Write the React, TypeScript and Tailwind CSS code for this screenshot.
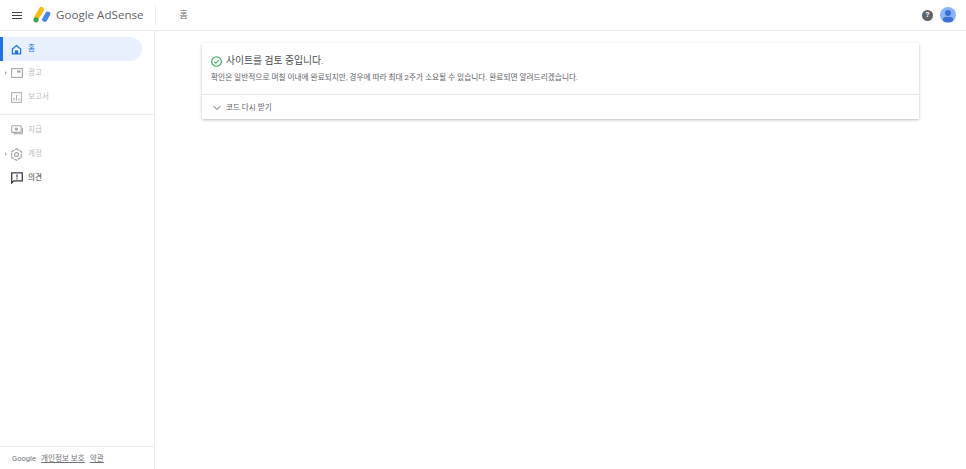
import { ChevronDown } from 'lucide-react';

const sans = "font-['Roboto','Noto_Sans_CJK_KR',sans-serif]";

function Logo() {
	return (
		<svg width="18" height="16" viewBox="0 0 18 16">
			<path d="M8.4 2.4 L4 10" stroke="#fbbc04" strokeWidth="5" strokeLinecap="round" />
			<path d="M14.8 7 L11.6 12.4" stroke="#4285f4" strokeWidth="5" strokeLinecap="round" />
			<circle cx="3" cy="12.8" r="2.6" fill="#34a853" />
		</svg>
	);
}

function HomeIcon() {
	return (
		<svg width="11" height="11" viewBox="0 0 12 12" fill="none">
			<path d="M1.5 5.5 L6 1.6 L10.5 5.5 V10.8 H1.5 Z" stroke="#1a73e8" strokeWidth="1.3" />
			<rect x="4.2" y="7" width="3.6" height="3.8" fill="#1a73e8" />
		</svg>
	);
}

function AdsIcon() {
	return (
		<svg width="12" height="10" viewBox="0 0 12 10" fill="none">
			<rect x="0.6" y="0.6" width="10.8" height="8.8" stroke="#a8a8a8" strokeWidth="1.1" />
			<rect x="6" y="2.5" width="3.6" height="2.2" fill="#a8a8a8" />
		</svg>
	);
}

function ReportIcon() {
	return (
		<svg width="11" height="11" viewBox="0 0 11 11" fill="none">
			<rect x="0.6" y="0.6" width="9.8" height="9.8" stroke="#b8b0ac" strokeWidth="1.1" />
			<path d="M3 8.5 V5.5 M5.5 8.5 V3 M8 8.5 V6.5" stroke="#b0b0b0" strokeWidth="1.1" />
		</svg>
	);
}

function PaymentIcon() {
	return (
		<svg width="12" height="10" viewBox="0 0 12 10" fill="none">
			<rect x="0.6" y="0.8" width="9.6" height="6.6" rx="1" stroke="#a8a8a8" strokeWidth="1.1" />
			<circle cx="5.4" cy="4.1" r="1.7" fill="#a8a8a8" />
			<path d="M11.4 3 V8.8 H2.5" stroke="#a8a8a8" strokeWidth="1.1" />
		</svg>
	);
}

function GearIcon() {
	return (
		<svg width="13" height="13" viewBox="0 0 12 12" fill="none">
			<path d="M6 0.8 L10.5 3.4 V8.6 L6 11.2 L1.5 8.6 V3.4 Z" stroke="#a8a8a8" strokeWidth="1.2" strokeDasharray="3 0.7" />
			<circle cx="6" cy="6" r="1.8" stroke="#a8a8a8" strokeWidth="1.1" />
		</svg>
	);
}

function FeedbackIcon() {
	return (
		<svg width="12" height="12" viewBox="0 0 12 12" fill="none">
			<path d="M0.7 11 V0.8 H11.3 V8.8 H2.8 Z" stroke="#3c4043" strokeWidth="1.3" />
			<path d="M6 2.6 V5.4 M6 6.2 V7.6" stroke="#3c4043" strokeWidth="1.2" />
		</svg>
	);
}

function Caret() {
	return <span className="absolute left-[5px] top-1/2 -mt-[2px] h-0 w-0 border-y-2 border-l-2 border-y-transparent border-l-[#b0b0b0]" />;
}

function NavItem({ icon, label, caret, muted = true }: { icon: React.ReactNode; label: string; caret?: boolean; muted?: boolean }) {
	return (
		<div className="relative flex h-6 items-center pl-2">
			{caret && <Caret />}
			<div className="flex w-[17px] justify-center">{icon}</div>
			<span className={`ml-[3px] text-[7.6px] ${muted ? 'text-[#bdbdbd]' : 'text-[#3c4043]'}`}>{label}</span>
		</div>
	);
}

export default function App() {
	return (
		<div className={`flex h-[469px] w-[966px] flex-col overflow-hidden bg-white ${sans}`}>
			<header className="flex h-[31px] shrink-0 items-center border-b border-[#ebebeb] pl-3 pr-[10px]">
				<div className="flex w-[10px] flex-col gap-[2px]">
					<span className="h-px bg-[#3c4043]" />
					<span className="h-px bg-[#3c4043]" />
					<span className="h-px bg-[#3c4043]" />
				</div>
				<div className="ml-[11px]">
					<Logo />
				</div>
				<span className="ml-[5px] font-['Open_Sans',sans-serif] text-[11.6px] text-[#5f6368]">Google AdSense</span>
				<div className="ml-[11px] h-5 w-px bg-[#ececec]" />
				<span className="ml-6 translate-y-px text-[9px] text-[#5f6368]">홈</span>
				<div className="ml-auto flex items-center gap-[7px]">
					<span className="flex size-[11px] items-center justify-center rounded-full bg-[#5f6368] text-[8px] font-bold text-white">?</span>
					<div className="relative size-4 overflow-hidden rounded-full bg-[#8ab4f8]">
						<span className="absolute left-[5px] top-[3px] size-[6px] rounded-full bg-[#3b6fd8]" />
						<span className="absolute left-[3px] top-[10px] h-[5px] w-[10px] rounded-full bg-[#3b6fd8]" />
					</div>
				</div>
			</header>
			<div className="flex min-h-0 flex-1">
				<aside className="flex w-[155px] shrink-0 flex-col border-r border-[#ebebeb]">
					<div className="flex flex-1 flex-col pt-[6px]">
						<div className="relative mr-3 flex h-6 items-center rounded-r-full bg-[#e8f0fe] pl-2">
							<span className="absolute left-0 top-0 h-full w-[3px] bg-[#1a73e8]" />
							<div className="flex w-[17px] justify-center">
								<HomeIcon />
							</div>
							<span className="ml-[3px] text-[7.6px] text-[#1a73e8]">홈</span>
						</div>
						<NavItem icon={<AdsIcon />} label="광고" caret />
						<NavItem icon={<ReportIcon />} label="보고서" />
						<div className="mb-[3px] mt-[5px] h-px bg-[#ebebeb]" />
						<NavItem icon={<PaymentIcon />} label="지급" />
						<NavItem icon={<GearIcon />} label="계정" caret />
						<NavItem icon={<FeedbackIcon />} label="의견" muted={false} />
					</div>
					<div className="flex h-[23px] items-center gap-[5px] border-t border-[#ebebeb] pl-3 pt-[2px] text-[7.6px] text-[#6f7377]">
						<span>Google</span>
						<span className="underline">개인정보 보호</span>
						<span className="underline">약관</span>
					</div>
				</aside>
				<main className="min-w-0 flex-1 pl-[47px] pr-[47px] pt-3">
					<section className="rounded-[1px] bg-white shadow-[0_1px_3px_rgba(60,64,67,0.35)]">
						<div className="h-[52px] border-b border-[#e6e6e6] pl-[9px] pt-[12px]">
							<div className="flex items-center gap-[4px]">
								<svg width="11" height="11" viewBox="0 0 11 11" fill="none">
									<circle cx="5.5" cy="5.5" r="4.8" stroke="#34a853" strokeWidth="1.1" />
									<path d="M3.2 5.6 L4.9 7.3 L7.9 4" stroke="#34a853" strokeWidth="1.1" />
								</svg>
								<h1 className="text-[9.8px] font-normal leading-3 text-[#4a4e52]">사이트를 검토 중입니다.</h1>
							</div>
							<p className="mt-[5px] text-[7.7px] leading-3 text-[#5f6368]">확인은 일반적으로 며칠 이내에 완료되지만, 경우에 따라 최대 2주가 소요될 수 있습니다. 완료되면 알려드리겠습니다.</p>
						</div>
						<div className="flex h-6 items-center gap-[3px] pl-[9px] pt-px text-[7.6px] text-[#5f6368]">
							<ChevronDown size={12} strokeWidth={2} />
							<span>코드 다시 받기</span>
						</div>
					</section>
				</main>
			</div>
		</div>
	);
}
